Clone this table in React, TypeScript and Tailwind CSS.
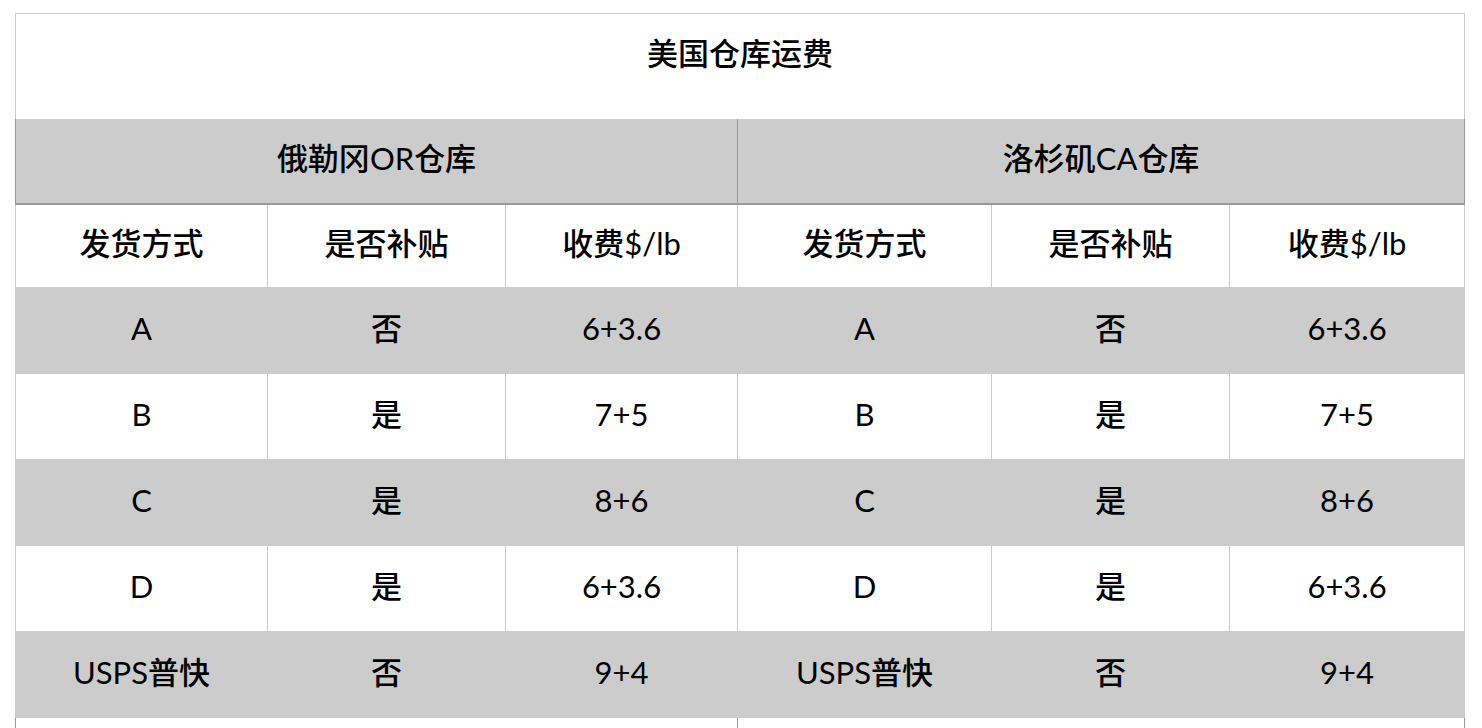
import React from "react";

const font = { fontFamily: "Lato, 'Noto Sans CJK SC', sans-serif" };

const rows = [
  { way: "A", sub: "否", fee: "6+3.6" },
  { way: "B", sub: "是", fee: "7+5" },
  { way: "C", sub: "是", fee: "8+6" },
  { way: "D", sub: "是", fee: "6+3.6" },
  { way: "USPS普快", sub: "否", fee: "9+4" },
];

// CJK in medium weight, latin stays regular like the original sheet
function Txt({ s }: { s: string }) {
  const parts = s.match(/[\u4e00-\u9fff]+|[^\u4e00-\u9fff]+/g) ?? [];
  return (
    <>
      {parts.map((p, i) =>
        /[\u4e00-\u9fff]/.test(p) ? (
          <span key={i} className="font-medium">
            {p}
          </span>
        ) : (
          <span key={i} className="font-normal">
            {p}
          </span>
        )
      )}
    </>
  );
}

const cell = "border border-[#cccccc] text-center align-middle p-0 pb-[5px]";

export default function App() {
  return (
    <div className="min-h-screen bg-white text-black" style={font}>
      <table className="ml-[15px] mt-[13px] w-[1449px] table-fixed border-collapse text-[31px] leading-[40px]">
        <colgroup>
          <col className="w-[252px]" />
          <col className="w-[238px]" />
          <col className="w-[232px]" />
          <col className="w-[254px]" />
          <col className="w-[238px]" />
          <col className="w-[235px]" />
        </colgroup>
        <tbody>
          {/* title */}
          <tr className="h-[105px]">
            <td colSpan={6} className="border border-b-0 border-[#cccccc] p-0 pt-[19px] text-center align-top">
              <Txt s="美国仓库运费" />
            </td>
          </tr>

          {/* warehouses */}
          <tr className="h-[85px] bg-[#cccccc]">
            <td colSpan={3} className="border border-t-0 border-b-2 border-[#999999] p-0 pb-[5px] text-center align-middle">
              <Txt s="俄勒冈OR仓库" />
            </td>
            <td colSpan={3} className="border border-t-0 border-b-2 border-[#999999] p-0 pb-[5px] text-center align-middle">
              <Txt s="洛杉矶CA仓库" />
            </td>
          </tr>

          {/* column headings */}
          <tr className="h-[84px]">
            {["发货方式", "是否补贴", "收费$/lb", "发货方式", "是否补贴", "收费$/lb"].map((t, i) => (
              <td key={i} className={cell}>
                <Txt s={t} />
              </td>
            ))}
          </tr>

          {rows.map((r, i) => (
            <tr key={i} className={i % 2 === 0 ? "h-[86px] bg-[#cccccc]" : "h-[86px] bg-white"}>
              <td className={cell}><Txt s={r.way} /></td>
              <td className={cell}><Txt s={r.sub} /></td>
              <td className={cell}><Txt s={r.fee} /></td>
              <td className={cell}><Txt s={r.way} /></td>
              <td className={cell}><Txt s={r.sub} /></td>
              <td className={cell}><Txt s={r.fee} /></td>
            </tr>
          ))}

          <tr className="h-[86px]">
            <td colSpan={3} className="border border-[#999999]" />
            <td colSpan={3} className="border border-[#999999]" />
          </tr>
        </tbody>
      </table>
    </div>
  );
}
